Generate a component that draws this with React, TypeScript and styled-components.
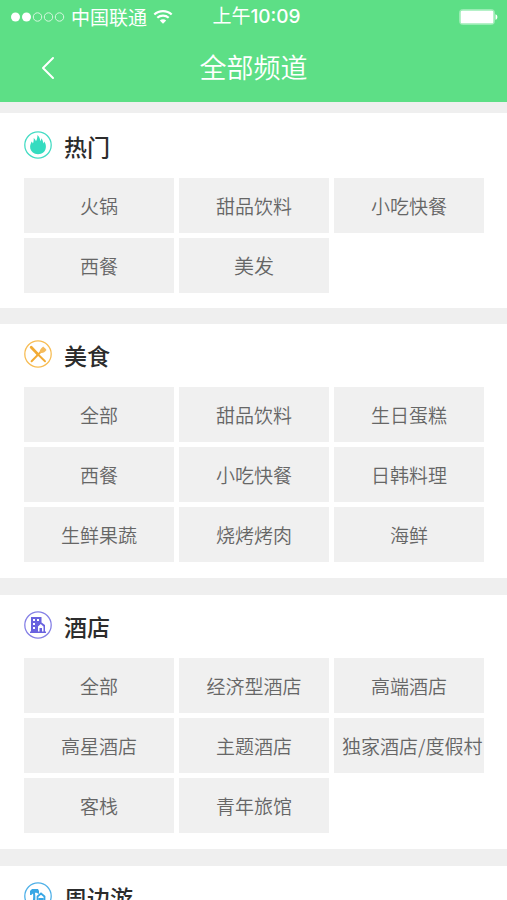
import React from "react";
import styled, { createGlobalStyle } from "styled-components";

const GlobalStyle = createGlobalStyle`
  *, *::before, *::after { box-sizing: border-box; }
  html, body { margin: 0; height: 100%; overflow: hidden; }
  body {
    background: #efefef;
    font-family: "Noto Sans CJK SC", "Noto Sans", sans-serif;
    color: #333;
  }
  #root { height: 100%; overflow: hidden; }
`;

const TopBar = styled.header`
  background: #5ddf86;
  color: #fff;
  margin-bottom: 11px;
`;

const StatusBar = styled.div`
  display: grid;
  grid-template-columns: 1fr auto 1fr;
  align-items: center;
  height: 34px;
  padding: 0 9px 0 11px;
  font-size: 19px;
  line-height: 34px;
`;

const Carrier = styled.div`
  display: flex;
  align-items: center;
  gap: 6px;
  white-space: nowrap;
`;

const Time = styled.time`
  font-family: Inter, "Noto Sans CJK SC", sans-serif;
  font-size: 19px;
  font-weight: 500;
  padding-left: 4px;
`;

const TimeOfDay = styled.span`
  font-weight: 400;
`;

const BatterySlot = styled.div`
  display: flex;
  justify-content: flex-end;
`;

const NavBar = styled.div`
  display: grid;
  grid-template-columns: 60px 1fr 60px;
  align-items: center;
  height: 68px;
  padding: 0 18px;
`;

const BackButton = styled.button`
  display: flex;
  align-items: center;
  justify-content: center;
  width: 60px;
  height: 48px;
  padding: 0;
  border: 0;
  background: none;
  color: inherit;
  cursor: pointer;
`;

const PageTitle = styled.h1`
  margin: 0;
  font-size: 27px;
  font-weight: 350;
  line-height: 66px;
  padding-bottom: 2px;
  text-align: center;
`;

const Section = styled.section<{ $lead?: boolean }>`
  background: #fff;
  padding: ${(p) => (p.$lead ? "2px 23px 15px 24px" : "0 23px 16px 24px")};
  margin-bottom: ${(p) => (p.$lead ? 16 : 17)}px;
`;

const SectionHead = styled.div`
  display: flex;
  align-items: center;
  gap: 12px;
  height: 60px;
  margin-bottom: 3px;
`;

const SectionTitle = styled.h2`
  margin: 0;
  padding-top: 2px;
  font-size: 23px;
  font-weight: 500;
  line-height: 58px;
  color: #2c2c2c;
`;

const TileGrid = styled.div`
  display: grid;
  grid-template-columns: repeat(3, minmax(0, 1fr));
  gap: 5px;
`;

const Tile = styled.button<{ $large?: boolean }>`
  height: 55px;
  padding: 0 8px;
  border: 0;
  background: #f0f0f0;
  color: #666;
  font-family: inherit;
  font-size: ${(p) => (p.$large ? 20 : 19)}px;
  font-weight: 350;
  line-height: 55px;
  white-space: nowrap;
  cursor: pointer;
`;

const TileLabel = styled.span`
  display: block;
  width: 100%;
  text-align: center;
`;

const Badge = ({ color, children }: { color: string; children: React.ReactNode }) => (
  <svg width="28" height="28" viewBox="0 0 28 28" fill="none" aria-hidden="true">
    <circle cx="14" cy="14" r="13.2" stroke={color} strokeWidth="1.3" />
    {children}
  </svg>
);

const FlameIcon = () => (
  <Badge color="#45dcc4">
    <path
      fill="#35dcc0"
      d="M11 22.8C7.800 21.500 5.900 18.900 6.100 15.600C6.200 13.500 7 12 7.600 10.400C8.300 11 8.700 11.700 8.900 12.500C9.700 10.700 9.800 8.800 9.700 7C10.800 7.800 11.600 9 11.900 10.300C13 8.500 13.500 6.300 13.400 4C15.200 5.700 16.200 7.800 16.400 10.200C17 9.400 17.300 8.400 17.400 7.300C18.600 8.800 19.100 10.600 19.200 12.500C19.700 12 20 11.400 20.200 10.600C21.400 12.200 22 14 21.900 16C21.800 19.100 20 21.700 17 22.800C15 23.400 13 23.400 11 22.800Z"
    />
  </Badge>
);

const CutleryIcon = () => (
  <Badge color="#f7bd55">
    <path d="M7.200 7.200L13.300 13.600" stroke="#f2ab35" strokeWidth="2.800" strokeLinecap="round" />
    <path d="M12.500 13L21 21.300" stroke="#f2ab35" strokeWidth="1.900" strokeLinecap="round" />
    <path d="M7.600 21.200L17 11.600" stroke="#f2ab35" strokeWidth="2" strokeLinecap="round" />
    <path d="M15.800 12.500C15.400 10.500 16.700 8.700 19.200 6.600L19.900 7.300L21.400 8.600L22.500 10C20.600 12.500 18.200 13.800 15.800 12.500Z" fill="#f5bb5c" />
  </Badge>
);

const HotelIcon = () => (
  <Badge color="#8580e6">
    <path
      fill="#6962df"
      fillRule="evenodd"
      d="M7 6H17.500V11.500L21 14V20.500H22V22H6V20.500H7ZM9 8V10H11V8ZM13 8V10H15V8ZM9 12V14H11V12ZM9 16V18H11V16ZM14 15.500V20.500H15.500V17H18V20.500H19.500V15.500L16.700 13Z"
    />
  </Badge>
);

const TravelIcon = () => (
  <Badge color="#50b1e8">
    <path
      fill="#38a7e5"
      d="M6 13V9L8 7H14L15 9V12L12.500 10.700H10.900C11.600 14 11.500 17 11 20H8.500C9.300 16.600 9.400 13.800 9 11.500L7.300 13Z"
    />
    <path d="M13.500 14.500L17 11.500L20.500 14.500V20.500H18.500V17H15.500V20.500H13.500Z" stroke="#38a7e5" strokeWidth="1.800" />
    <path d="M6 21H22" stroke="#38a7e5" strokeWidth="1.500" />
  </Badge>
);

const SignalIcon = () => (
  <svg width="54" height="12" viewBox="0 0 54 12" aria-label="信号" role="img">
    <circle cx="4.500" cy="6" r="4.500" fill="#fff" />
    <circle cx="15.500" cy="6" r="4.500" fill="#fff" />
    {[26.5, 37.5, 48.5].map((cx) => (
      <circle key={cx} cx={cx} cy="6" r="4.200" fill="none" stroke="#d5f7df" strokeWidth="1" />
    ))}
  </svg>
);

const WifiIcon = () => (
  <svg width="20" height="16" viewBox="0 0 20 16" fill="none" aria-label="Wi-Fi" role="img">
    <path d="M1.300 5.500C6.200 .9 13.800 .9 18.700 5.500" stroke="#fff" strokeWidth="2.200" />
    <path d="M4.300 8.800C7.500 5.900 12.500 5.900 15.700 8.800" stroke="#fff" strokeWidth="2.200" />
    <path d="M6.800 11.500C8.600 9.900 11.400 9.900 13.200 11.500L10 14.700Z" fill="#fff" />
  </svg>
);

const BatteryIcon = () => (
  <svg width="39" height="16" viewBox="0 0 39 16" aria-label="电量" role="img">
    <rect x=".7" y=".7" width="34.600" height="14.600" rx="2.500" fill="none" stroke="#a8efbe" strokeWidth="1" />
    <rect x="1.500" y="1.500" width="33" height="13" rx="1.500" fill="#fff" />
    <path d="M36.500 5.200C39 6 39 10 36.500 10.800Z" fill="#fff" />
  </svg>
);

type Channel = {
  title: string;
  Icon: React.ComponentType;
  items: string[];
  large?: string;
};

const channels: Channel[] = [
  { title: "热门", Icon: FlameIcon, items: ["火锅", "甜品饮料", "小吃快餐", "西餐", "美发"], large: "美发" },
  {
    title: "美食",
    Icon: CutleryIcon,
    items: ["全部", "甜品饮料", "生日蛋糕", "西餐", "小吃快餐", "日韩料理", "生鲜果蔬", "烧烤烤肉", "海鲜"],
  },
  {
    title: "酒店",
    Icon: HotelIcon,
    items: ["全部", "经济型酒店", "高端酒店", "高星酒店", "主题酒店", "独家酒店/度假村", "客栈", "青年旅馆"],
  },
  { title: "周边游", Icon: TravelIcon, items: [] },
];

export default function App() {
  return (
    <>
      <GlobalStyle />
      <TopBar>
        <StatusBar>
          <Carrier>
            <SignalIcon />
            <span>中国联通</span>
            <WifiIcon />
          </Carrier>
          <Time>
            <TimeOfDay>上午</TimeOfDay>10:09
          </Time>
          <BatterySlot>
            <BatteryIcon />
          </BatterySlot>
        </StatusBar>
        <NavBar>
          <BackButton aria-label="返回">
            <svg width="14" height="24" viewBox="0 0 14 24" fill="none" aria-hidden="true">
              <path d="M12 2L2 12L12 22" stroke="#fff" strokeWidth="2" strokeLinecap="round" strokeLinejoin="round" />
            </svg>
          </BackButton>
          <PageTitle>全部频道</PageTitle>
        </NavBar>
      </TopBar>
      <main>
        {channels.map(({ title, Icon, items, large }, index) => (
          <Section key={title} $lead={index === 0}>
            <SectionHead>
              <Icon />
              <SectionTitle>{title}</SectionTitle>
            </SectionHead>
            <TileGrid>
              {items.map((item) => (
                <Tile key={item} type="button" $large={item === large}>
                  <TileLabel>{item}</TileLabel>
                </Tile>
              ))}
            </TileGrid>
          </Section>
        ))}
      </main>
    </>
  );
}
